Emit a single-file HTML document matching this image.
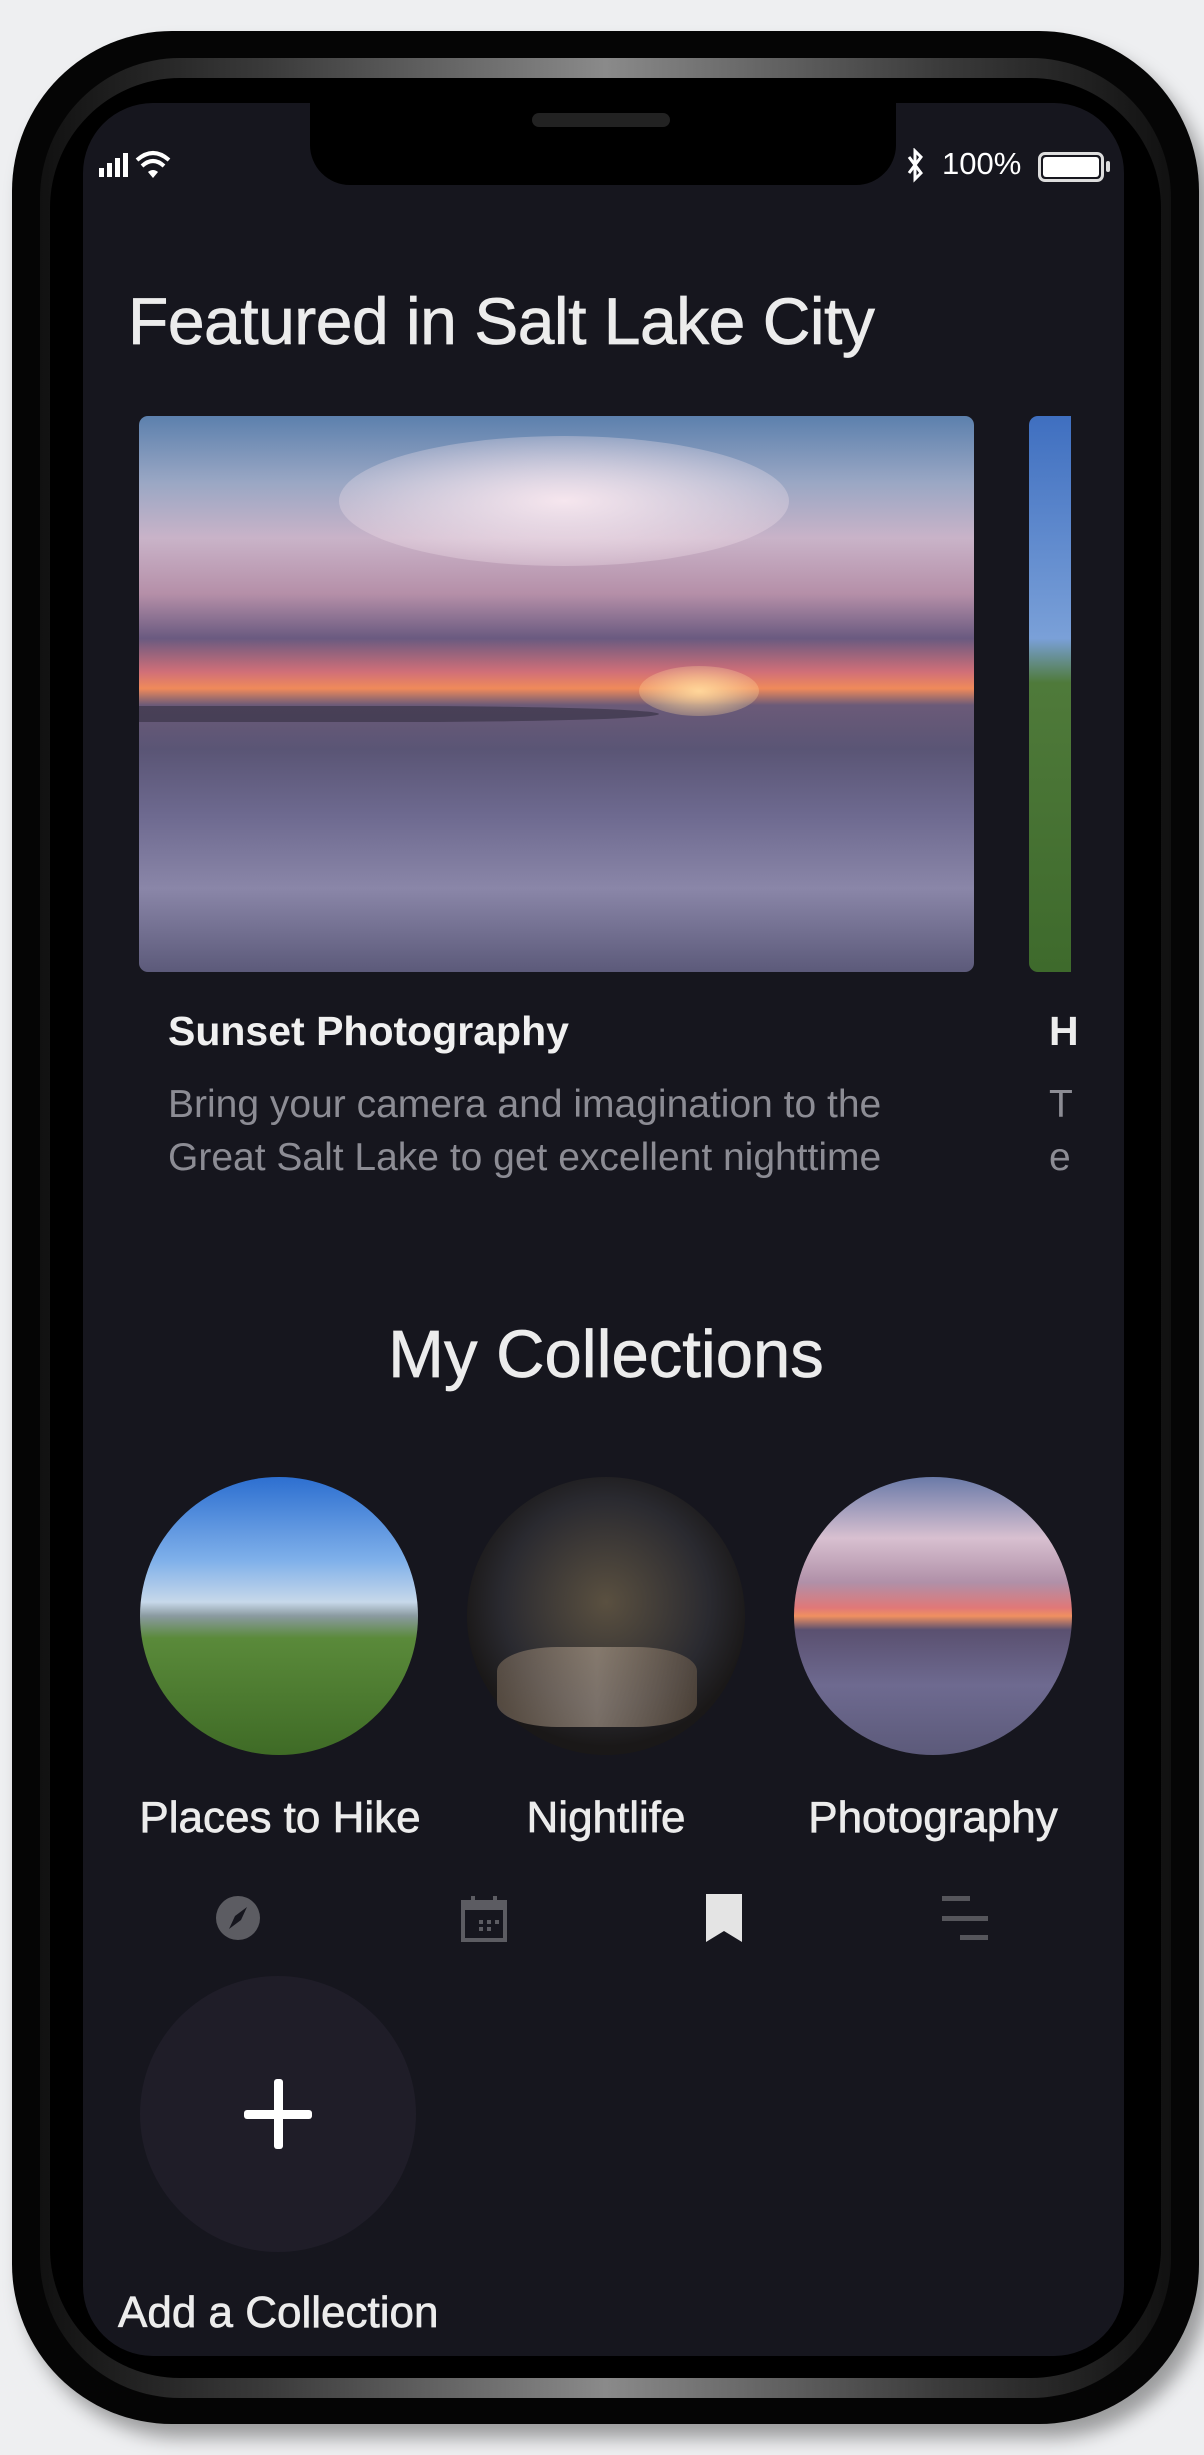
<!DOCTYPE html>
<html><head><meta charset="utf-8"><style>
*{margin:0;padding:0;box-sizing:border-box}
body{width:1204px;height:2455px;background:#eeeff1;position:relative;overflow:hidden;font-family:"Liberation Sans",sans-serif}
.abs{position:absolute}
#outer{left:12px;top:31px;width:1187px;height:2393px;border-radius:160px;background:#050505;box-shadow:10px 14px 18px rgba(0,0,0,.35)}
#ring{left:40px;top:58px;width:1131px;height:2340px;border-radius:140px;background:linear-gradient(90deg,#111,#3a3a3a 20%,#8a8a8a 50%,#3a3a3a 80%,#111);}
#inner{left:50px;top:78px;width:1111px;height:2300px;border-radius:130px;background:#000}
#screen{left:83px;top:103px;width:1041px;height:2253px;border-radius:70px;background:#16161e;overflow:hidden}
#notch{left:310px;top:103px;width:586px;height:82px;background:#000;border-radius:0 0 40px 40px}
.t{color:#ececec;white-space:nowrap;-webkit-text-stroke:0.7px #ececec}
.c{text-align:center;width:400px}
</style></head><body>
<div id="outer" class="abs"></div>
<div id="ring" class="abs"></div>
<div id="inner" class="abs"></div>
<div id="screen" class="abs"></div>
<div id="notch" class="abs"><div class="abs" style="left:222px;top:10px;width:138px;height:14px;border-radius:7px;background:#222"></div></div>

<svg class="abs" style="left:97px;top:148px" width="100" height="34">
<rect x="2" y="20" width="5" height="9" fill="#fff"/><rect x="10" y="15" width="5" height="14" fill="#fff"/><rect x="18" y="10" width="5" height="19" fill="#fff"/><rect x="26" y="5" width="5" height="24" fill="#fff"/>
<path d="M40 12 Q56 -2 72 12" stroke="#fff" stroke-width="4" fill="none"/><path d="M45 18 Q56 8 67 18" stroke="#fff" stroke-width="4" fill="none"/><path d="M51 24 L56 30 L61 24 Q56 20 51 24Z" fill="#fff"/>
</svg>
<svg class="abs" style="left:904px;top:148px" width="24" height="36"><path d="M5 9 L17 25 L11 31 L11 3 L17 9 L5 25" stroke="#fff" stroke-width="3" fill="none"/></svg>
<div class="abs t" style="left:942px;top:146px;font-size:31px;color:#fff;-webkit-text-stroke:0">100%</div>
<div class="abs" style="left:1038px;top:152px;width:66px;height:30px;border:3px solid #ddd;border-radius:7px;padding:2px"><div style="width:100%;height:100%;background:#fff;border-radius:3px"></div></div>
<div class="abs" style="left:1106px;top:161px;width:4px;height:11px;background:#ddd;border-radius:2px"></div>

<div class="abs t" style="left:128px;top:283px;font-size:66px;letter-spacing:-0.5px">Featured in Salt Lake City</div>

<div class="abs" style="left:139px;top:416px;width:835px;height:556px;border-radius:9px;overflow:hidden;background:linear-gradient(180deg,#5c80ad 0%,#9aa7c4 12%,#c9b3c8 22%,#b58fa8 32%,#6a5a80 40%,#d06f78 46%,#f08a5a 49%,#6b5a78 52%,#5a5575 60%,#6e6a90 72%,#8a86a8 85%,#5c5a7a 100%)">
<div class="abs" style="left:200px;top:20px;width:450px;height:130px;border-radius:50%;background:radial-gradient(#f6e6ee,rgba(230,200,220,0))"></div>
<div class="abs" style="left:500px;top:250px;width:120px;height:50px;border-radius:50%;background:radial-gradient(#ffd69a,rgba(255,150,80,0))"></div>
<div class="abs" style="left:0;top:290px;width:520px;height:16px;background:#3b3448;opacity:.7;border-radius:0 50% 50% 0"></div>
</div>
<div class="abs" style="left:1029px;top:416px;width:42px;height:556px;border-radius:9px 0 0 9px;background:linear-gradient(180deg,#3f6fc0,#7aa0d8 40%,#4f7a3a 48%,#3e6a2c 100%)"></div>

<div class="abs t" style="left:168px;top:1008px;font-size:41px;font-weight:bold;color:#f0f0f0;-webkit-text-stroke:0">Sunset Photography</div>
<div class="abs t" style="left:168px;top:1078px;font-size:39px;color:#8c8c94;line-height:53px;-webkit-text-stroke:0">Bring your camera and imagination to the<br>Great Salt Lake to get excellent nighttime</div>
<div class="abs t" style="left:1049px;top:1008px;font-size:41px;font-weight:bold;-webkit-text-stroke:0">H</div>
<div class="abs t" style="left:1049px;top:1078px;font-size:39px;color:#8c8c94;line-height:53px;-webkit-text-stroke:0">T<br>e</div>

<div class="abs t" style="left:0;width:1212px;text-align:center;top:1316px;font-size:67px">My Collections</div>

<div class="abs" style="left:140px;top:1477px;width:278px;height:278px;border-radius:50%;background:linear-gradient(180deg,#2d6fd0 0%,#7fb0ea 30%,#c7d8ea 45%,#8a9aa0 50%,#5a8a3a 58%,#3f6b26 100%)"></div>
<div class="abs" style="left:467px;top:1477px;width:278px;height:278px;border-radius:50%;background:radial-gradient(circle at 50% 45%,#5a5040,#2a2a30 50%,#1a1818 70%),#222;"><div class="abs" style="left:30px;top:170px;width:200px;height:80px;background:linear-gradient(90deg,#7a6a5a,#b0a090,#6a5a4a);opacity:.6;border-radius:30%"></div></div>
<div class="abs" style="left:794px;top:1477px;width:278px;height:278px;border-radius:50%;background:linear-gradient(180deg,#6a7aa8 0%,#d8c0d0 22%,#b090a8 38%,#e07878 47%,#f09060 50%,#5a5070 55%,#6e6a90 75%,#5c5a7a 100%)"></div>

<div class="abs t c" style="left:80px;top:1793px;font-size:44px">Places to Hike</div>
<div class="abs t c" style="left:406px;top:1793px;font-size:44px">Nightlife</div>
<div class="abs t c" style="left:733px;top:1793px;font-size:44px">Photography</div>

<svg class="abs" style="left:215px;top:1895px" width="46" height="46"><circle cx="23" cy="23" r="22" fill="#5c5c62"/><path d="M32 12 L20 21 L14 34 L26 25Z" fill="#16161e"/></svg>
<svg class="abs" style="left:461px;top:1894px" width="46" height="48"><rect x="2" y="8" width="42" height="38" fill="none" stroke="#5c5c62" stroke-width="4"/><rect x="2" y="8" width="42" height="8" fill="#5c5c62"/><rect x="10" y="2" width="4" height="8" fill="#5c5c62"/><rect x="32" y="2" width="4" height="8" fill="#5c5c62"/><rect x="18" y="26" width="4" height="4" fill="#5c5c62"/><rect x="26" y="26" width="4" height="4" fill="#5c5c62"/><rect x="34" y="26" width="4" height="4" fill="#5c5c62"/><rect x="18" y="33" width="4" height="4" fill="#5c5c62"/><rect x="26" y="33" width="4" height="4" fill="#5c5c62"/></svg>
<svg class="abs" style="left:705px;top:1893px" width="38" height="50"><path d="M1 1 H37 V49 L19 38 L1 49Z" fill="#e4e4e4"/></svg>
<svg class="abs" style="left:942px;top:1896px" width="46" height="44"><rect x="0" y="0" width="28" height="5" fill="#55555b"/><rect x="0" y="20" width="46" height="5" fill="#55555b"/><rect x="18" y="39" width="28" height="5" fill="#55555b"/></svg>

<div class="abs" style="left:140px;top:1976px;width:276px;height:276px;border-radius:50%;background:#1f1d28"></div>
<div class="abs" style="left:244px;top:2110px;width:68px;height:9px;background:#fff;border-radius:3px"></div>
<div class="abs" style="left:274px;top:2079px;width:9px;height:70px;background:#fff;border-radius:3px"></div>

<div class="abs t" style="left:118px;top:2288px;font-size:44px">Add a Collection</div>
</body></html>
